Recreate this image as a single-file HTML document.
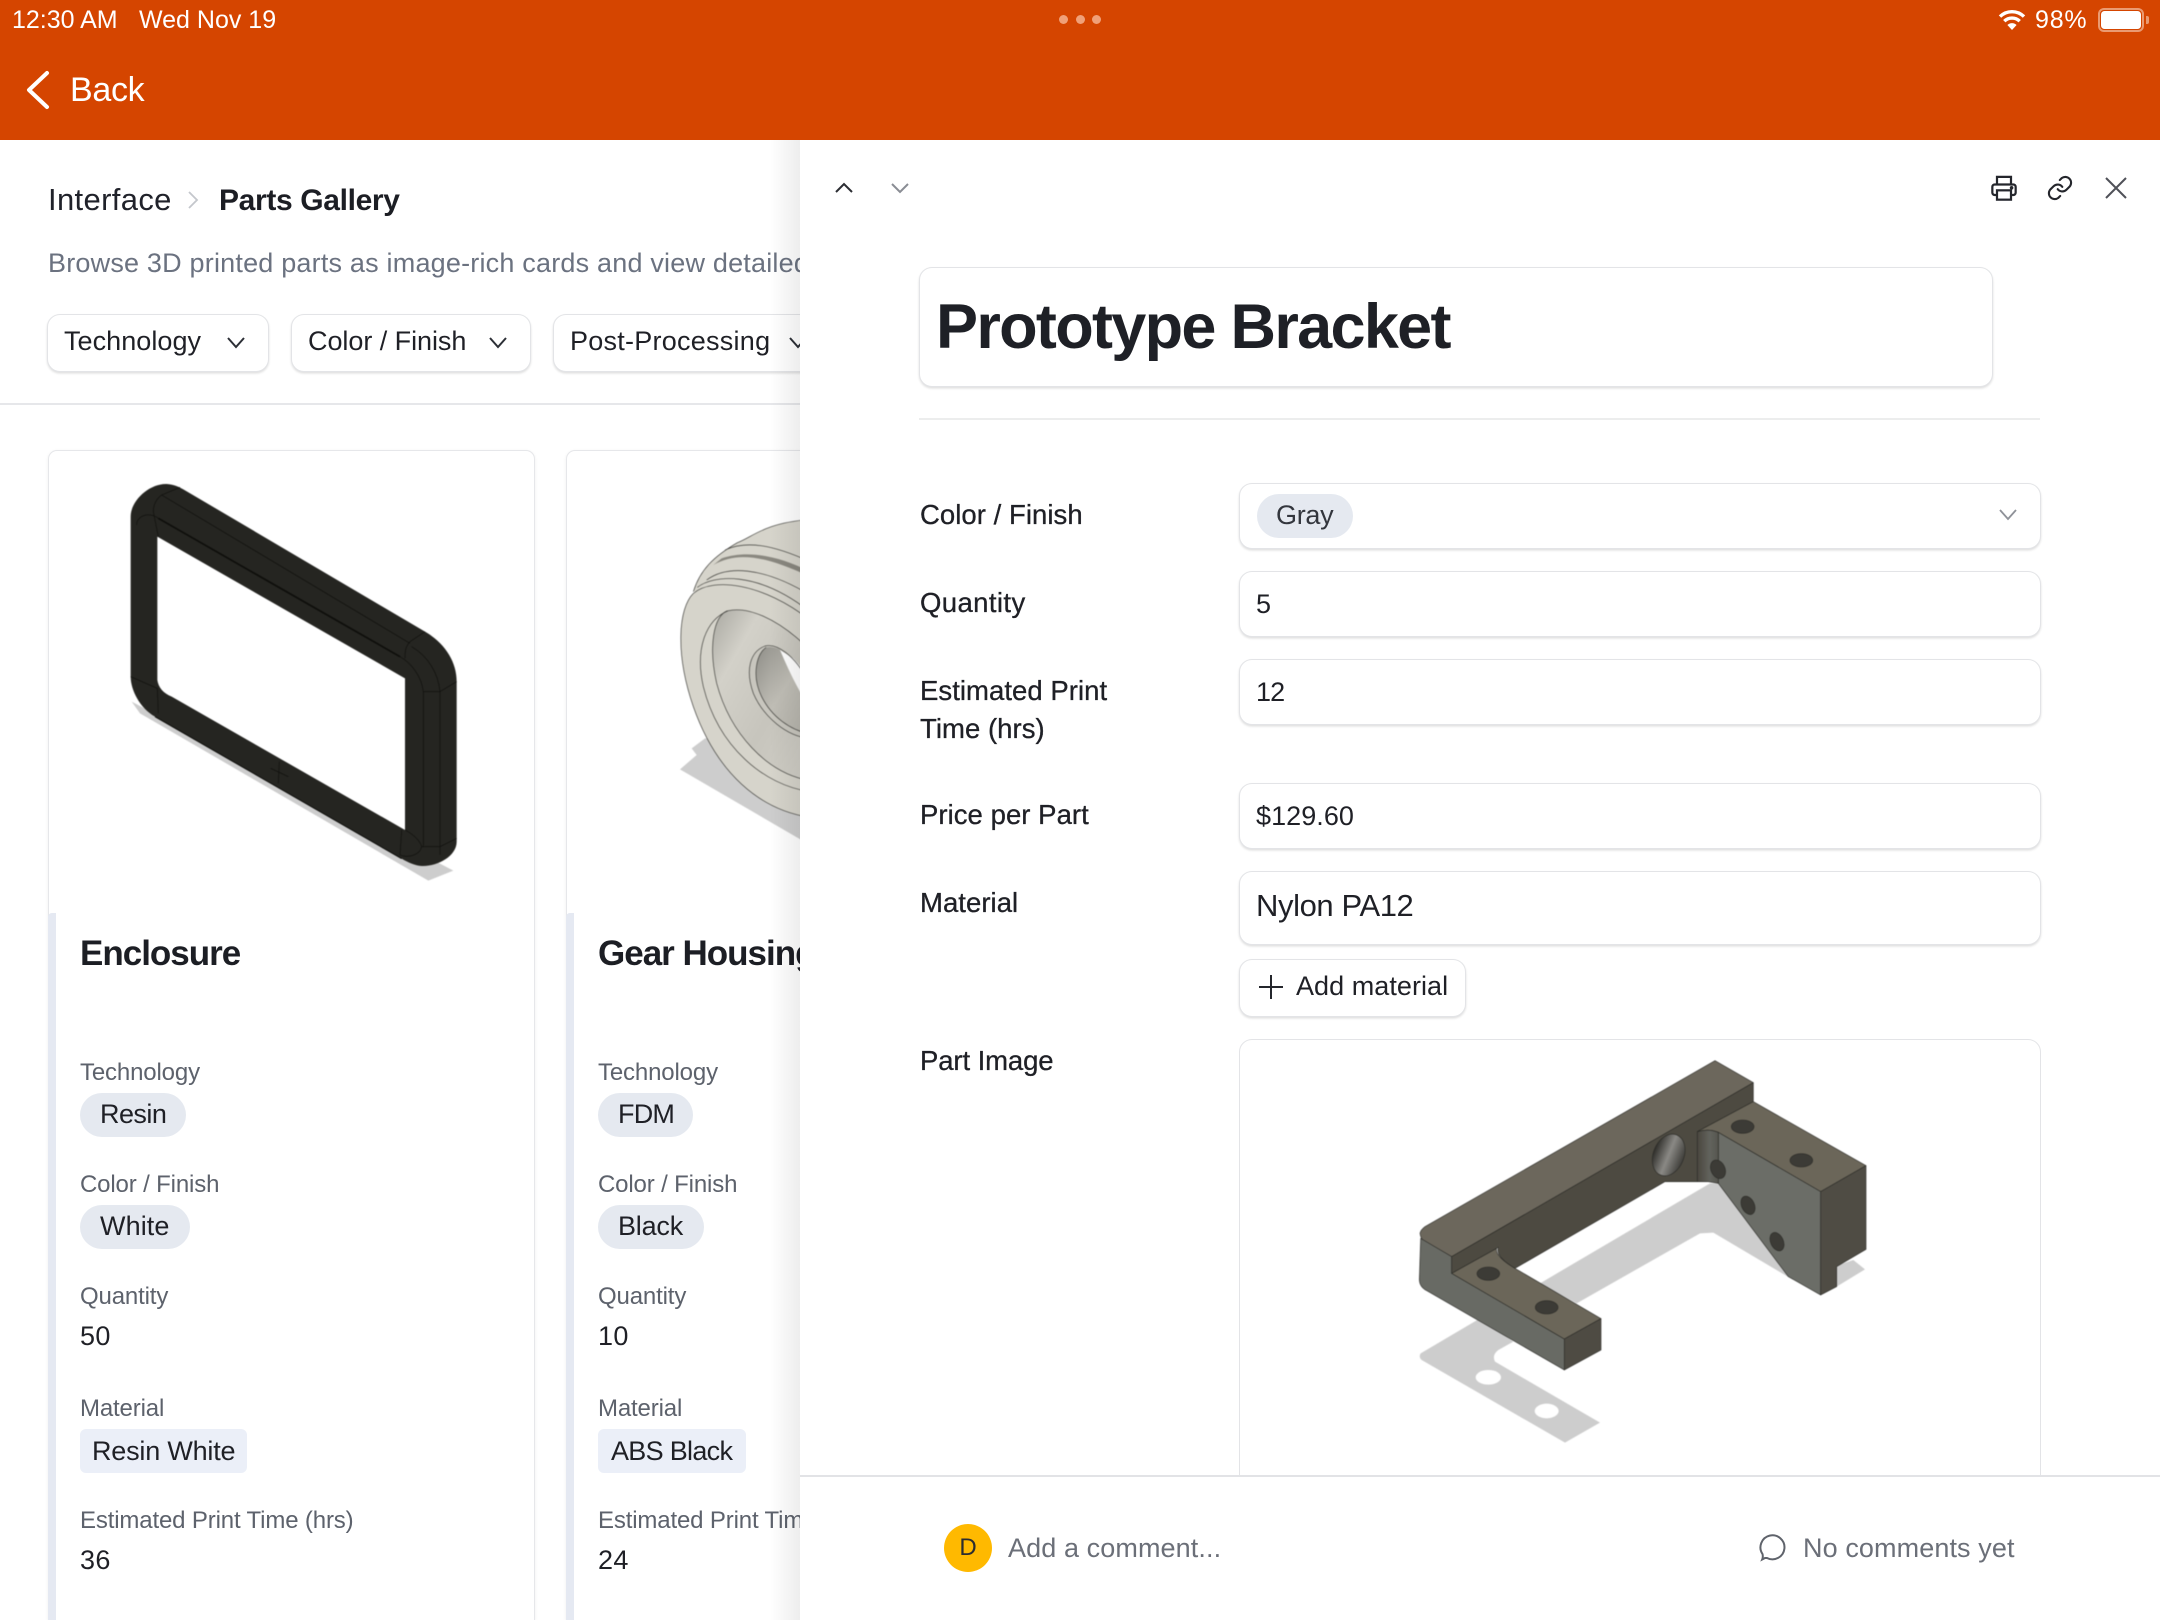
<!DOCTYPE html>
<html lang="en"><head><meta charset="utf-8"><title>Parts Gallery</title>
<style>
*{box-sizing:border-box}
html,body{margin:0;padding:0;width:2160px;height:1620px;overflow:hidden;background:#fff;font-family:"Liberation Sans",sans-serif;color:#1f2026}
#root{position:absolute;left:0;top:0;width:2160px;height:1620px;overflow:hidden;background:#fff;contain:strict}
.a,.t{position:absolute}
.t{white-space:nowrap;line-height:40px;height:40px}
#hdr{left:0;top:0;width:2160px;height:140px;background:#d54500}
.st{color:#fff;font-size:25px}
.box{position:absolute;background:#fff;border:1.5px solid #e3e4e7;border-radius:13px;box-shadow:0 1.5px 2px rgba(0,0,0,.13)}
.lbl{font-size:24px;color:#5d626c;letter-spacing:-.15px}
.val{font-size:27px;color:#1f2026;letter-spacing:.3px}
.pv{font-size:27px;color:#1f2026;letter-spacing:-.2px}
.pill{position:absolute;height:44px;background:#e5e9f0;border-radius:22px}
.tag{position:absolute;height:44px;background:#ebeff8;border-radius:6px}
.card{position:absolute;top:450px;height:1170px;width:487px;background:#fff;border:1.5px solid #e6e7ea;border-bottom:none;border-radius:9px 9px 0 0;box-shadow:0 1px 3px rgba(0,0,0,.07)}
.acc{position:absolute;top:913px;height:707px;width:7.5px;background:#e5e9f2;border-radius:4px 0 0 0}
.nm{font-size:35px;font-weight:700;color:#1c1e24;letter-spacing:-1px}
.fl{font-size:27.5px;color:#1f2026;letter-spacing:.05px;-webkit-text-stroke:.3px #1f2026}
.fv{font-size:27px;color:#1f2026;letter-spacing:.2px}
.ft{font-size:27px;color:#6b6f78;letter-spacing:.1px}
.flt{font-size:27px;color:#1f2026;letter-spacing:.05px}
svg{position:absolute;overflow:hidden}
.img{filter:blur(.45px)}
</style></head><body><div id="root">

<!-- left page -->
<div class="t" style="left:48px;top:180px;font-size:31px;letter-spacing:.35px;color:#20222a">Interface</div>
<svg style="left:186px;top:190px" width="14" height="20" viewBox="0 0 14 20"><path d="M3 2l8 8-8 8" fill="none" stroke="#c4c7cc" stroke-width="1.8"/></svg>
<div class="t" style="left:219px;top:181px;font-size:30px;font-weight:700;letter-spacing:-.35px;color:#1c1e24">Parts Gallery</div>
<div class="t" style="left:48px;top:243px;width:752px;overflow:hidden;font-size:27px;letter-spacing:.2px;color:#6b7280">Browse 3D printed parts as image-rich cards and view detailed information</div>

<div class="box" style="left:47px;top:314px;width:222px;height:58px"></div>
<div class="t flt" style="left:64px;top:321px">Technology</div>
<svg style="left:226px;top:335px" width="20" height="16" viewBox="0 0 20 16"><path d="M2 3l8 9 8-9" fill="none" stroke="#2c2f36" stroke-width="2"/></svg>
<div class="box" style="left:291px;top:314px;width:240px;height:58px"></div>
<div class="t flt" style="left:308px;top:321px;letter-spacing:-.05px">Color / Finish</div>
<svg style="left:488px;top:335px" width="20" height="16" viewBox="0 0 20 16"><path d="M2 3l8 9 8-9" fill="none" stroke="#2c2f36" stroke-width="2"/></svg>
<div class="box" style="left:553px;top:314px;width:300px;height:58px"></div>
<div class="t flt" style="left:570px;top:321px;letter-spacing:.25px">Post-Processing</div>
<svg style="left:788px;top:335px" width="20" height="16" viewBox="0 0 20 16"><path d="M2 3l8 9 8-9" fill="none" stroke="#2c2f36" stroke-width="2"/></svg>
<div class="a" style="left:0;top:403px;width:810px;height:2px;background:#e6e7ea"></div>

<div class="card" style="left:47.5px"></div>
<div class="card" style="left:565.5px"></div>
<div class="acc" style="left:48px"></div>
<div class="acc" style="left:566px"></div>

<!-- enclosure frame -->
<svg class="img" style="left:100px;top:450px" width="400" height="450" viewBox="0 0 1200 1350">
<path d="M95,755L1060,1262L985,1292L120,790Z" fill="#cdcdcd"/>
<path fill-rule="evenodd" fill="#252521" d="M92,200C92,150 150,100 200,102C220,103 235,110 250,118L975,545C1035,580 1070,635 1070,695L1070,1175C1070,1220 1010,1250 965,1248C945,1247 925,1238 905,1226L165,800C120,775 92,720 92,680ZM172,260L172,690C175,712 190,730 215,740L915,1140L915,685Z"/>
<g fill="none" stroke="#0e0e0b" stroke-width="1.8">
<path d="M160,185L175,260M110,225C110,195 150,185 175,205M240,112L185,135C165,150 160,170 160,185"/>
<path d="M185,135L930,580"/>
<path d="M175,205L900,620" stroke-width="5"/>
<path d="M975,545L930,575C915,590 915,610 915,625M900,620C935,640 965,680 970,725L970,1190M935,590C985,620 1015,670 1020,725L1070,695M970,725L1020,725M1020,725L1020,1215M965,1190L1020,1190L1070,1165"/>
<path d="M92,680L172,715L175,790"/>
<path d="M165,800L905,1226" stroke-width="3"/>
<path d="M512,955L565,980M538,935L535,1000"/>
<path d="M905,1140L900,1215C925,1225 960,1215 965,1190C960,1170 935,1150 915,1140"/>
</g>
</svg>

<!-- gear housing -->
<svg class="img" style="left:650px;top:480px" width="160" height="400" viewBox="0 0 480 1200">
<defs>
<linearGradient id="g1" x1="0" y1="0" x2="1" y2="1"><stop offset="0" stop-color="#a9a8a1"/><stop offset=".25" stop-color="#d3d1c9"/><stop offset=".6" stop-color="#c7c5bd"/><stop offset="1" stop-color="#d2d0c8"/></linearGradient>
<linearGradient id="g2" x1="0" y1="0" x2="1" y2="1"><stop offset="0" stop-color="#8f8e88"/><stop offset=".5" stop-color="#c0beb6"/><stop offset="1" stop-color="#b5b3ab"/></linearGradient>
</defs>
<path d="M165,775L125,805L140,825L90,868L480,1095L480,775Z" fill="#cdcdcd"/>
<path d="M130,335C150,270 190,230 262,188C310,170 340,130 480,118L480,460L200,330Z" fill="#d6d4cb"/>
<path d="M190,255C260,215 340,225 480,290L480,275C380,225 290,210 215,235Z" fill="#8a8880"/>
<path d="M130,340C190,290 340,310 480,420L480,1012C330,990 200,880 130,680C75,520 85,385 130,340Z" fill="#d6d4cb"/>
<path d="M480,510C380,410 290,380 235,392C165,420 135,510 160,620C205,800 340,915 480,935Z" fill="#d6d4cb"/>
<path d="M480,510C380,410 290,380 232,392C190,410 175,500 200,610C240,760 350,880 480,902Z" fill="url(#g1)"/>
<path d="M480,610C430,520 380,490 345,498C300,515 285,570 310,640C340,710 410,770 480,775Z" fill="#c8c6be"/>
<path d="M480,610C430,525 385,495 348,502C318,525 305,590 335,650C365,710 420,750 480,762Z" fill="url(#g2)"/>
<path d="M390,510L430,535L480,590L480,700L450,635C425,590 405,545 390,510Z" fill="#fff"/>
<g fill="none" stroke="#3f3f3b" stroke-width="2">
<path d="M130,335C150,270 190,230 262,188C310,170 340,130 480,118"/>
<path d="M225,210C290,180 370,195 480,245M170,300C230,255 340,260 480,345M142,322C190,285 320,270 480,395"/>
<path d="M130,340C85,385 75,520 130,680C200,880 330,990 480,1012"/>
<path d="M130,340C190,290 340,310 480,420"/>
<path d="M480,510C380,410 290,380 235,392C165,420 135,510 160,620C205,800 340,915 480,935"/>
<path d="M232,392C190,410 175,500 200,610C240,760 350,880 480,902"/>
<path d="M480,610C430,520 380,490 345,498C300,515 285,570 310,640C340,710 410,770 480,775"/>
<path d="M348,502C318,525 305,590 335,650C365,710 420,750 480,762"/>
</g>
</svg>

<div class="t nm" style="left:80px;top:934px">Enclosure</div>
<div class="t lbl" style="left:80px;top:1053px">Technology</div>
<div class="pill" style="left:80px;top:1093px;width:106px"></div><div class="t pv" style="left:100px;top:1094px;letter-spacing:-.55px">Resin</div>
<div class="t lbl" style="left:80px;top:1165px">Color / Finish</div>
<div class="pill" style="left:80px;top:1205px;width:110px"></div><div class="t pv" style="left:100px;top:1206px;letter-spacing:.1px">White</div>
<div class="t lbl" style="left:80px;top:1277px">Quantity</div>
<div class="t val" style="left:80px;top:1316px">50</div>
<div class="t lbl" style="left:80px;top:1389px">Material</div>
<div class="tag" style="left:80px;top:1429px;width:167px"></div><div class="t pv" style="left:92px;top:1431px">Resin White</div>
<div class="t lbl" style="left:80px;top:1501px">Estimated Print Time (hrs)</div>
<div class="t val" style="left:80px;top:1540px">36</div>

<div class="t nm" style="left:598px;top:934px">Gear Housing</div>
<div class="t lbl" style="left:598px;top:1053px">Technology</div>
<div class="pill" style="left:598px;top:1093px;width:95px"></div><div class="t pv" style="left:618px;top:1094px;letter-spacing:-.8px">FDM</div>
<div class="t lbl" style="left:598px;top:1165px">Color / Finish</div>
<div class="pill" style="left:598px;top:1205px;width:106px"></div><div class="t pv" style="left:618px;top:1206px">Black</div>
<div class="t lbl" style="left:598px;top:1277px">Quantity</div>
<div class="t val" style="left:598px;top:1316px">10</div>
<div class="t lbl" style="left:598px;top:1389px">Material</div>
<div class="tag" style="left:598px;top:1429px;width:148px"></div><div class="t" style="left:611px;top:1431px;font-size:27px;letter-spacing:-.7px">ABS Black</div>
<div class="t lbl" style="left:598px;top:1501px">Estimated Print Time (hrs)</div>
<div class="t val" style="left:598px;top:1540px">24</div>

<!-- panel -->
<div class="a" style="left:770px;top:140px;width:30px;height:1480px;background:linear-gradient(90deg,rgba(0,0,0,0),rgba(0,0,0,.07))"></div>
<div class="a" style="left:800px;top:140px;width:1360px;height:1480px;background:#fff"></div>

<svg style="left:834px;top:179px" width="20" height="18" viewBox="0 0 20 18"><path d="M2 13l8-8 8 8" fill="none" stroke="#2b2d33" stroke-width="2"/></svg>
<svg style="left:890px;top:179px" width="20" height="18" viewBox="0 0 20 18"><path d="M2 5l8 8 8-8" fill="none" stroke="#8a8d94" stroke-width="2"/></svg>
<svg style="left:1990px;top:174px" width="28" height="28" viewBox="0 0 24 24" fill="none" stroke="#24262c" stroke-width="1.9"><path d="M6 9V2.5h12V9"/><path d="M6 18H4a2 2 0 0 1-2-2v-5a2 2 0 0 1 2-2h16a2 2 0 0 1 2 2v5a2 2 0 0 1-2 2h-2"/><rect x="6" y="14" width="12" height="8"/><circle cx="18.5" cy="11.8" r=".6" fill="#24262c"/></svg>
<svg style="left:2046px;top:174px" width="28" height="28" viewBox="0 0 24 24" fill="none" stroke="#24262c" stroke-width="1.8" stroke-linecap="round"><path d="M10 13a5 5 0 0 0 7.5.5l3-3a5 5 0 0 0-7-7l-1.7 1.7"/><path d="M14 11a5 5 0 0 0-7.5-.5l-3 3a5 5 0 0 0 7 7l1.7-1.7"/></svg>
<svg style="left:2104px;top:176px" width="24" height="24" viewBox="0 0 24 24"><path d="M2 2l20 20M22 2L2 22" stroke="#4f5158" stroke-width="2" fill="none"/></svg>

<div class="box" style="left:919px;top:267px;width:1074px;height:120px"></div>
<div class="t" style="left:936px;top:287px;height:80px;line-height:80px;font-size:63px;font-weight:700;letter-spacing:-1.7px;color:#1e2026">Prototype Bracket</div>
<div class="a" style="left:919px;top:418px;width:1121px;height:2px;background:#eceded"></div>

<div class="t fl" style="left:920px;top:495px">Color / Finish</div>
<div class="box" style="left:1239px;top:483px;width:802px;height:66px"></div>
<div class="pill" style="left:1257px;top:494px;width:96px"></div><div class="t fv" style="left:1276px;top:495px;color:#33363d;letter-spacing:-.3px">Gray</div>
<svg style="left:1998px;top:507px" width="20" height="16" viewBox="0 0 20 16"><path d="M2 3l8 9 8-9" fill="none" stroke="#8f9299" stroke-width="1.8"/></svg>

<div class="t fl" style="left:920px;top:583px;letter-spacing:.4px">Quantity</div>
<div class="box" style="left:1239px;top:571px;width:802px;height:66px"></div>
<div class="t fv" style="left:1256px;top:584px">5</div>

<div class="t fl" style="left:920px;top:671px">Estimated Print</div>
<div class="t fl" style="left:920px;top:709px">Time (hrs)</div>
<div class="box" style="left:1239px;top:659px;width:802px;height:66px"></div>
<div class="t fv" style="left:1256px;top:672px;letter-spacing:-.9px">12</div>

<div class="t fl" style="left:920px;top:795px">Price per Part</div>
<div class="box" style="left:1239px;top:783px;width:802px;height:66px"></div>
<div class="t fv" style="left:1256px;top:796px;letter-spacing:.05px">$129.60</div>

<div class="t fl" style="left:920px;top:883px">Material</div>
<div class="box" style="left:1239px;top:871px;width:802px;height:74px"></div>
<div class="t" style="left:1256px;top:886px;font-size:31px;letter-spacing:-.4px">Nylon PA12</div>

<div class="box" style="left:1239px;top:959px;width:227px;height:58px"></div>
<svg style="left:1258px;top:974px" width="26" height="26" viewBox="0 0 26 26"><path d="M13 1v24M1 13h24" stroke="#24262c" stroke-width="2" fill="none"/></svg>
<div class="t fv" style="left:1296px;top:966px;letter-spacing:.05px">Add material</div>

<div class="t fl" style="left:920px;top:1041px;letter-spacing:-.1px">Part Image</div>
<div class="a" style="left:1239px;top:1039px;width:802px;height:500px;background:#fff;border:1.5px solid #e3e4e7;border-radius:13px"></div>

<!-- bracket -->
<svg class="img" style="left:1380px;top:1040px" width="520" height="440" viewBox="0 0 1560 1320">
<defs>
<linearGradient id="b1" x1="0" y1="0" x2="1" y2="0"><stop offset="0" stop-color="#4a473f"/><stop offset=".6" stop-color="#62635d"/><stop offset="1" stop-color="#56564f"/></linearGradient>
<linearGradient id="b2" x1="0" y1="0" x2="1" y2="0"><stop offset="0" stop-color="#2f2e2a"/><stop offset=".5" stop-color="#8a8985"/><stop offset="1" stop-color="#3f3e3a"/></linearGradient>
</defs>
<g fill="#cdcdcd">
<path d="M122,940L300,835L400,905L355,930Q335,945 345,965L660,1148L555,1208L125,960Q115,950 122,940Z"/>
<path d="M480,730L990,430L1030,430L1240,720L1000,578L960,580L590,790Z"/>
<path d="M1360,680L1420,660L1455,688L1370,740Z"/>
</g>
<ellipse cx="325" cy="1012" rx="38" ry="22" fill="#fff"/>
<ellipse cx="500" cy="1113" rx="36" ry="22" fill="#fff"/>
<g stroke="#2a2a26" stroke-width="1.8" stroke-linejoin="round">
<path d="M120,580Q122,570 135,560L1005,62L1120,128L215,650L130,602Q122,595 120,580Z" fill="#6c675c"/>
<path d="M122,595L215,650L215,700L553,897L553,990L140,752Q118,740 118,718Z" fill="#686a64"/>
<path d="M215,700L350,625Q345,650 405,685L663,836L553,897Z" fill="#6b6659"/>
<path d="M553,897L663,836L663,930L553,990Z" fill="#4e4b43"/>
<path d="M215,650L1120,128L1120,185L952,275L952,425L855,425L405,685Q345,650 355,622L215,700Z" fill="#4d4a41"/>
<path d="M1120,185L1458,377L1322,455L1015,277Q985,265 952,275Z" fill="#6b6659"/>
<path d="M1015,277L1322,455L1322,765L1225,710L1015,430Z" fill="#6b6d67"/>
<path d="M952,275Q985,265 1015,277L1015,430L985,425L952,425Z" fill="url(#b1)"/>
<path d="M1322,455L1458,377L1458,628L1370,680L1370,740L1322,765Z" fill="#4f4c44"/>
<ellipse cx="866" cy="345" rx="46" ry="65" transform="rotate(22 866 345)" fill="url(#b2)"/>
<g fill="#3c3b36">
<ellipse cx="1088" cy="260" rx="34" ry="20"/><ellipse cx="1264" cy="361" rx="34" ry="20"/>
<ellipse cx="325" cy="701" rx="34" ry="20"/><ellipse cx="500" cy="802" rx="34" ry="20"/>
<ellipse cx="1014" cy="388" rx="21" ry="29" transform="rotate(-25 1014 388)"/>
<ellipse cx="1104" cy="496" rx="19" ry="29" transform="rotate(-25 1104 496)"/>
<ellipse cx="1191" cy="605" rx="19" ry="29" transform="rotate(-25 1191 605)"/>
</g>
</g>
</svg>

<div class="a" style="left:800px;top:1475px;width:1360px;height:145px;background:#fff;border-top:2px solid #e2e3e6"></div>
<div class="a" style="left:944px;top:1524px;width:48px;height:48px;border-radius:50%;background:#ffb900"></div>
<div class="t" style="left:944px;top:1528px;width:48px;text-align:center;font-size:24px;color:#2b2c30">D</div>
<div class="t ft" style="left:1008px;top:1528px">Add a comment...</div>
<svg style="left:1758px;top:1534px" width="28" height="28" viewBox="0 0 28 28"><path d="M6 24.5L3.2 26C4 24 4 22.5 3.5 20.5A12 12 0 1 1 8 24.5Z" transform="translate(1 -0.5)" fill="none" stroke="#5f636b" stroke-width="2"/></svg>
<div class="t ft" style="left:1803px;top:1528px">No comments yet</div>

<!-- header -->
<div class="a" id="hdr"></div>
<div class="t st" style="left:12px;top:0">12:30 AM</div>
<div class="t st" style="left:139px;top:0">Wed Nov 19</div>
<div class="a" style="left:1059px;top:15px;width:9px;height:9px;border-radius:50%;background:#f0a078"></div>
<div class="a" style="left:1076px;top:15px;width:9px;height:9px;border-radius:50%;background:#f0a078"></div>
<div class="a" style="left:1092px;top:15px;width:9px;height:9px;border-radius:50%;background:#f0a078"></div>
<svg style="left:1998px;top:9px" width="28" height="22" viewBox="0 0 28 22"><path d="M14 21l-4.6-5a6.5 6.5 0 0 1 9.2 0Z" fill="#fff"/><path d="M6.3 12.2a11 11 0 0 1 15.4 0M2 7.6a17 17 0 0 1 24 0" fill="none" stroke="#fff" stroke-width="3.4"/></svg>
<div class="t st" style="left:2035px;top:0;letter-spacing:.8px">98%</div>
<div class="a" style="left:2098px;top:8px;width:46px;height:24px;border:2px solid #ea9a72;border-radius:6px"></div>
<div class="a" style="left:2101px;top:11px;width:40px;height:18px;background:#fff;border-radius:3.5px"></div>
<div class="a" style="left:2146px;top:16px;width:2.5px;height:8px;background:#ea9a72;border-radius:0 2px 2px 0"></div>
<svg style="left:24px;top:70px" width="28" height="40" viewBox="0 0 28 40"><path d="M23 3L5 20l18 17" fill="none" stroke="#fff" stroke-width="4" stroke-linecap="round" stroke-linejoin="round"/></svg>
<div class="t" style="left:70px;top:70px;font-size:34px;letter-spacing:-.3px;color:#fff;line-height:40px">Back</div>
</div></body></html>
